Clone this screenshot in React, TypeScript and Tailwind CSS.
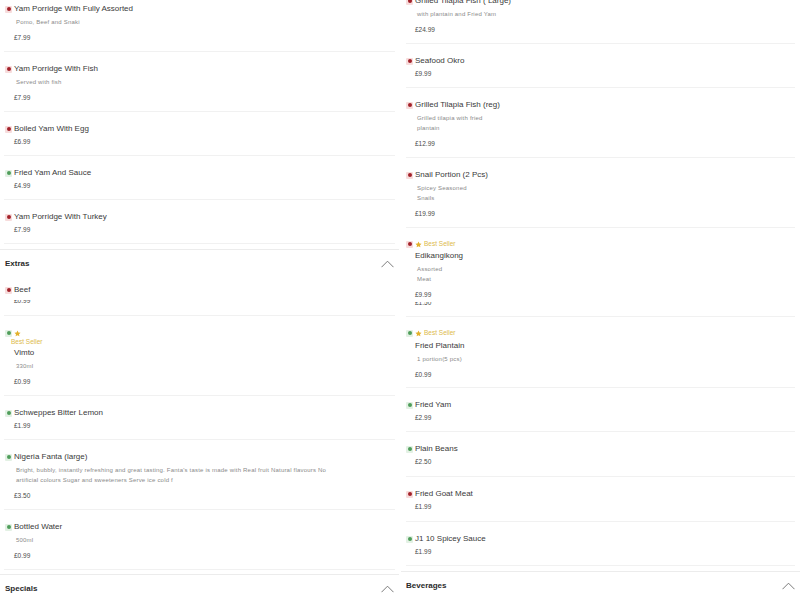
type Item = {
    name: string
    price: string
    veg?: boolean
    desc?: string
    best?: "inline" | "wrap"
    hidden?: string
    tall?: boolean
}

const leftTop: Item[] = [
    { name: "Yam Porridge With Fully Assorted", desc: "Pomo, Beef and Snaki", price: "£7.99" },
    { name: "Yam Porridge With Fish", desc: "Served with fish", price: "£7.99" },
    { name: "Boiled Yam With Egg", price: "£6.99" },
    { name: "Fried Yam And Sauce", price: "£4.99", veg: true },
    { name: "Yam Porridge With Turkey", price: "£7.99" },
]

const extras: Item[] = [
    { name: "Beef", price: "", hidden: "£0.99" },
    { name: "Vimto", desc: "330ml", price: "£0.99", veg: true, best: "wrap" },
    { name: "Schweppes Bitter Lemon", price: "£1.99", veg: true },
    {
        name: "Nigeria Fanta (large)",
        desc: "Bright, bubbly, instantly refreshing and great tasting. Fanta's taste is made with Real fruit Natural flavours No artificial colours Sugar and sweeteners Serve ice cold f",
        price: "£3.50",
        veg: true,
    },
    { name: "Bottled Water", desc: "500ml", price: "£0.99", veg: true },
]

const rightTop: Item[] = [
    { name: "Grilled Tilapia Fish ( Large)", desc: "with plantain and Fried Yam", price: "£24.99" },
    { name: "Seafood Okro", price: "£9.99" },
    { name: "Grilled Tilapia Fish (reg)", desc: "Grilled tilapia with fried\nplantain", price: "£12.99" },
    { name: "Snail Portion (2 Pcs)", desc: "Spicey Seasoned\nSnails", price: "£19.99" },
    { name: "Edikangikong", desc: "Assorted\nMeat", price: "£9.99", best: "inline", hidden: "£1.50", tall: true },
    { name: "Fried Plantain", desc: "1 portion(5 pcs)", price: "£0.99", veg: true, best: "inline" },
    { name: "Fried Yam", price: "£2.99", veg: true },
    { name: "Plain Beans", price: "£2.50", veg: true, tall: true },
    { name: "Fried Goat Meat", price: "£1.99", tall: true },
    { name: "J1 10 Spicey Sauce", price: "£1.99", veg: true },
]

function Dot({ veg }: { veg?: boolean }) {
    return (
        <span className={`w-[7px] h-[7px] shrink-0 rounded-[1px] flex items-center justify-center ${veg ? "bg-[#e3f1e4]" : "bg-[#f7dcdc]"}`}>
            <span className={`w-[4px] h-[4px] rounded-full ${veg ? "bg-[#4f9d5a]" : "bg-[#a3222a]"}`}></span>
        </span>
    )
}

function Star() {
    return (
        <svg width="7" height="7" viewBox="0 0 24 24" className="shrink-0">
            <path d="M12 1.5l3.2 6.9 7.3.8-5.4 5 1.5 7.3L12 17.8l-6.6 3.7 1.5-7.3-5.4-5 7.3-.8z" fill="#e3b12c" />
        </svg>
    )
}

function Chevron() {
    return (
        <svg width="13" height="8" viewBox="0 0 13 8">
            <polyline points="0.5,7.2 6.5,1.2 12.5,7.2" fill="none" stroke="#6b6b6b" strokeWidth="0.9" />
        </svg>
    )
}

function MenuItem({ item, right }: { item: Item; right?: boolean }) {
    const best = item.best
    let pad = "pt-[12px] pb-[8px]"
    if (item.name === "Beef") pad = "pt-[8px] pb-[10px]"
    else if (best === "inline") pad = item.tall ? "pt-[11px] pb-[9px]" : "pt-[11px] pb-[7px]"
    else if (item.tall) pad = "pt-[12px] pb-[9px]"
    return (
        <div className={`border-b border-[#f1f1f1] ${right ? "mx-[5px]" : "mx-[4px] pl-[1px]"} ${pad}`}>
            {best === "inline" && (
                <div className="h-[10px] flex items-center gap-[2px]">
                    <Dot veg={item.veg} />
                    <Star />
                    <span className="text-[6.5px] text-[#dcb94c] leading-[10px]">Best Seller</span>
                </div>
            )}
            {best === "wrap" && (
                <>
                    <div className="h-[10px] flex items-center gap-[2px]">
                        <Dot veg={item.veg} />
                        <Star />
                    </div>
                    <div className="h-[8px] leading-[8px] text-[6.5px] text-[#dcb94c] ml-[6px]">Best Seller</div>
                </>
            )}
            {best ? (
                <div className={`${best === "inline" && !item.tall ? "mt-[3px]" : "mt-[2px]"} h-[10px] leading-[10px] text-[8px] text-[#3a3a3a] pl-[9px]`}>{item.name}</div>
            ) : (
                <div className="h-[10px] flex items-center gap-[2px]">
                    <Dot veg={item.veg} />
                    <span className="leading-[10px] text-[8px] text-[#3a3a3a]">{item.name}</span>
                </div>
            )}
            {item.desc && (
                <div className="mt-[3px] pl-[11px] max-w-[335px] text-[6px] tracking-[0.2px] leading-[10px] text-[#8a8a8a] whitespace-pre-line">
                    {item.desc}
                </div>
            )}
            {item.price && (
                <div className={`${item.desc ? "mt-[6px]" : "mt-[3px]"} pl-[9px] h-[10px] leading-[10px] text-[6.5px] text-[#4a4a4a]`}>{item.price}</div>
            )}
            {item.hidden && (
                <div className={`${item.price ? "mt-[2px]" : "mt-[5px]"} h-[5px] overflow-hidden pl-[9px]`}>
                    <div className="-mt-[4px] h-[10px] leading-[10px] text-[6.5px] text-[#4a4a4a]">{item.hidden}</div>
                </div>
            )}
        </div>
    )
}

function Header({ title }: { title: string }) {
    return (
        <div className="h-[28px] border-t border-[#ececec] px-[5px] flex items-center justify-between">
            <span className="text-[8px] font-semibold text-[#2a2a2a]">{title}</span>
            <Chevron />
        </div>
    )
}

export default function App() {
    return (
        <div className="w-[800px] h-[600px] overflow-hidden bg-white grid grid-cols-2 gap-[2px] items-start" style={{ fontFamily: "'Liberation Sans', Arial, sans-serif" }}>
            <div className="-mt-[8px]">
                <div className="pb-[5px]">
                    {leftTop.map((it) => (
                        <MenuItem key={it.name} item={it} />
                    ))}
                </div>
                <Header title="Extras" />
                <div className="pb-[4px]">
                    {extras.map((it) => (
                        <MenuItem key={it.name} item={it} />
                    ))}
                </div>
                <Header title="Specials" />
            </div>
            <div className="-mt-[16px]">
                <div className="pb-[5px]">
                    {rightTop.map((it) => (
                        <MenuItem key={it.name} item={it} right />
                    ))}
                </div>
                <Header title="Beverages" />
            </div>
        </div>
    )
}
